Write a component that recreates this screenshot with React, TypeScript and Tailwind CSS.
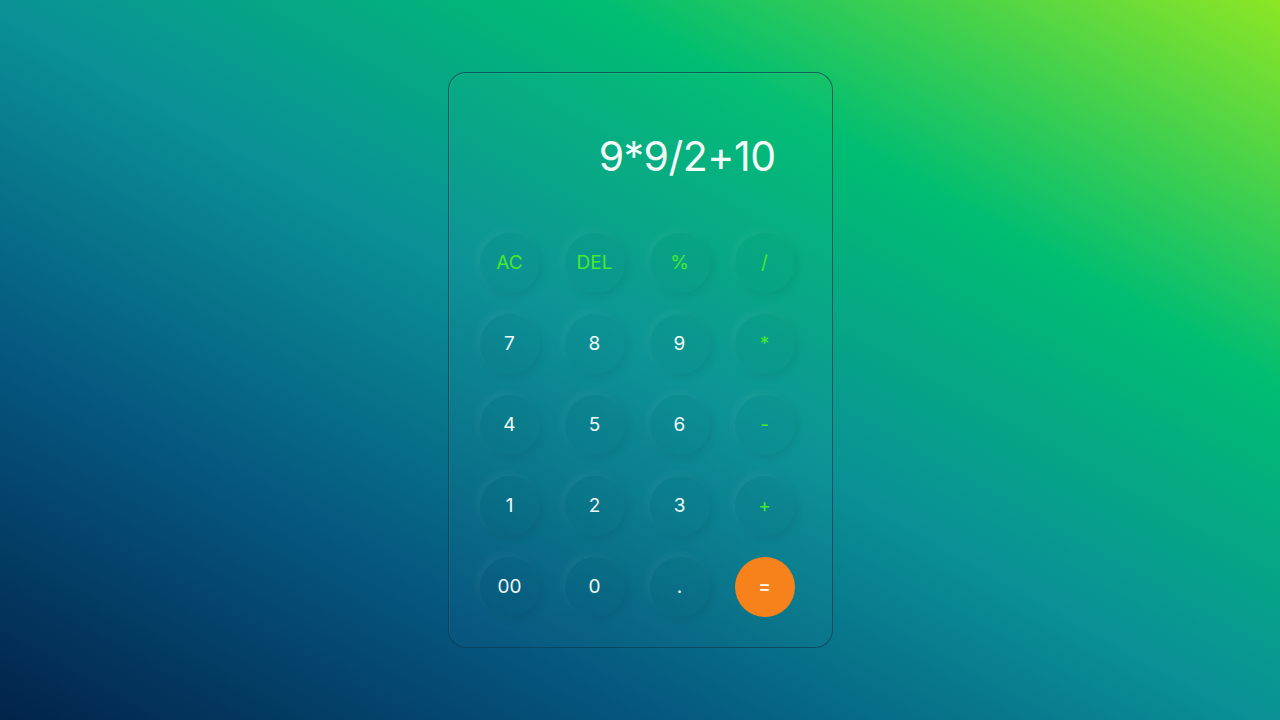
import React from 'react';

type Key = { label: string; kind: 'num' | 'op' | 'eq' };

const keys: Key[] = [
  { label: 'AC', kind: 'op' },
  { label: 'DEL', kind: 'op' },
  { label: '%', kind: 'op' },
  { label: '/', kind: 'op' },
  { label: '7', kind: 'num' },
  { label: '8', kind: 'num' },
  { label: '9', kind: 'num' },
  { label: '*', kind: 'op' },
  { label: '4', kind: 'num' },
  { label: '5', kind: 'num' },
  { label: '6', kind: 'num' },
  { label: '-', kind: 'op' },
  { label: '1', kind: 'num' },
  { label: '2', kind: 'num' },
  { label: '3', kind: 'num' },
  { label: '+', kind: 'op' },
  { label: '00', kind: 'num' },
  { label: '0', kind: 'num' },
  { label: '.', kind: 'num' },
  { label: '=', kind: 'eq' },
];

export default function App() {
  return (
    <div
      className="w-[1280px] h-[720px] flex items-center justify-center bg-[linear-gradient(to_top_right,#02234a_0%,#05567f_25%,#0a9296_50%,#00bd72_73%,#8ce625_100%)]"
      style={{ fontFamily: 'Inter, "Open Sans", sans-serif' }}
    >
      <div className="w-[385px] h-[576px] rounded-[18px] border border-[#0b3b50]/70 bg-white/[0.015] shadow-[inset_1px_1px_0_rgba(255,255,255,0.06)] flex flex-col">
        <div className="h-[160px] flex items-end justify-end pr-[56px] pb-[56px]">
          <span className="text-[41px] leading-none text-[#f2fbf6] tracking-[-0.5px]">9*9/2+10</span>
        </div>
        <div className="grid grid-cols-[repeat(4,60px)] gap-x-[25px] gap-y-[21px] pl-[31px]">
          {keys.map((k) => (
            <button
              key={k.label}
              className={
                k.kind === 'eq'
                  ? 'w-[60px] h-[60px] rounded-full bg-[#f7821b] text-white text-[19px] font-medium flex items-center justify-center'
                  : `w-[60px] h-[60px] rounded-full bg-black/[0.015] shadow-[-3px_-3px_8px_rgba(255,255,255,0.06),3px_3px_8px_rgba(0,0,0,0.07)] flex items-center justify-center text-[19px] ${
                      k.kind === 'op' ? 'text-[#45ea2e]' : 'text-[#eefaf6]'
                    }`
              }
            >
              {k.label}
            </button>
          ))}
        </div>
      </div>
    </div>
  );
}
